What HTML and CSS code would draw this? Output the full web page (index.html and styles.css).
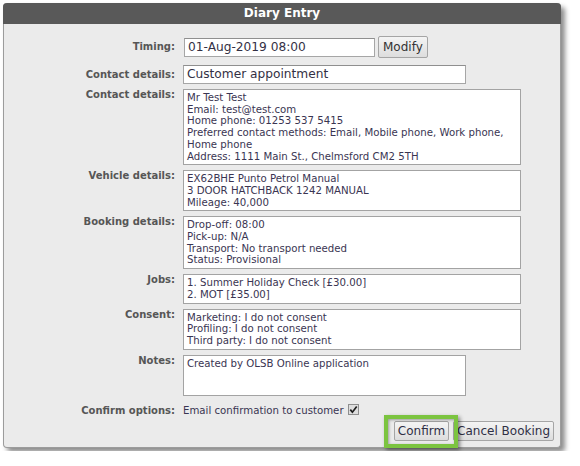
FILE: index.html
```html
<!DOCTYPE html>
<html>
<head>
<meta charset="utf-8">
<title>Diary Entry</title>
<link rel="stylesheet" href="styles.css">
</head>
<body>
<div class="panel">
  <div class="header">Diary Entry</div>
  <div class="form">
    <div class="label mid">Timing:</div>
    <div class="value inline">
      <span class="input timing">01-Aug-2019 08:00</span>
      <span class="btn modify">Modify</span>
    </div>

    <div class="label mid shift">Contact details:</div>
    <div class="value shift"><span class="input wide">Customer appointment</span></div>

    <div class="label">Contact details:</div>
    <div class="value"><div class="box">Mr Test Test<br>Email: test@test.com<br>Home phone: 01253 537 5415<br>Preferred contact methods: Email, Mobile phone, Work phone, Home phone<br>Address: 1111 Main St., Chelmsford CM2 5TH</div></div>

    <div class="label">Vehicle details:</div>
    <div class="value"><div class="box">EX62BHE Punto Petrol Manual<br>3 DOOR HATCHBACK 1242 MANUAL<br>Mileage: 40,000</div></div>

    <div class="label">Booking details:</div>
    <div class="value"><div class="box">Drop-off: 08:00<br>Pick-up: N/A<br>Transport: No transport needed<br>Status: Provisional</div></div>

    <div class="label">Jobs:</div>
    <div class="value"><div class="box">1. Summer Holiday Check [£30.00]<br>2. MOT [£35.00]</div></div>

    <div class="label">Consent:</div>
    <div class="value"><div class="box">Marketing: I do not consent<br>Profiling: I do not consent<br>Third party: I do not consent</div></div>

    <div class="label">Notes:</div>
    <div class="value"><div class="box notes">Created by OLSB Online application</div></div>

    <div class="label opt">Confirm options:</div>
    <div class="value opt">Email confirmation to customer <svg class="check" width="11" height="11" viewBox="0 0 11 11"><rect x="0.5" y="0.5" width="10" height="10" fill="#dedede" stroke="#8e8e8e"/><path d="M2.3 5.6 L4.4 8.2 L8.7 2.4" fill="none" stroke="#1e1e1e" stroke-width="1.7"/></svg></div>
  </div>
  <div class="actions">
    <span class="btn highlight">Confirm</span>
    <span class="btn">Cancel Booking</span>
  </div>
</div>
</body>
</html>
```
FILE: styles.css
```css
body {
  margin: 0;
  padding: 3px;
  background: #ffffff;
  font-family: "DejaVu Sans", Verdana, sans-serif;
}

.panel {
  width: 558px;
  box-sizing: border-box;
  background: #ebebeb;
  border: 1px solid #9c9c9c;
  border-top: 0;
  border-radius: 4px;
  box-shadow: 4px 4px 5px rgba(0, 0, 0, 0.45);
}

.header {
  height: 21px;
  margin: 0 -1px;
  background: #595959;
  color: #ffffff;
  font-weight: bold;
  font-size: 12px;
  line-height: 21px;
  text-align: center;
  border-radius: 4px 4px 0 0;
}

.form {
  display: grid;
  grid-template-columns: 171px 1fr;
  column-gap: 8px;
  row-gap: 5px;
  padding-top: 12px;
}

.label {
  text-align: right;
  font-weight: bold;
  font-size: 10px;
  line-height: 12px;
  color: #565656;
  align-self: start;
  white-space: nowrap;
}

.label.mid {
  align-self: center;
}

.shift {
  margin-top: 2px;
}

.value {
  color: #3a3552;
}

.inline {
  display: flex;
  align-items: center;
  gap: 3px;
  height: 22px;
}

.input {
  display: block;
  box-sizing: border-box;
  height: 19px;
  background: #ffffff;
  border: 1px solid #a6a6a6;
  border-top-color: #8f8f8f;
  padding: 0 3px;
  font-size: 12.2px;
  line-height: 17px;
  color: #333044;
  white-space: nowrap;
  overflow: hidden;
}

.input.timing {
  width: 191px;
  margin-left: 1px;
}

.input.wide {
  width: 283px;
}

.box {
  width: 338px;
  box-sizing: border-box;
  background: #ffffff;
  border: 1px solid #a3a3a3;
  padding: 2px 3px;
  font-size: 10.2px;
  line-height: 11.7px;
  color: #3a3552;
}

.box.notes {
  width: 283px;
  height: 41px;
}

.opt {
  margin-top: 3px;
  line-height: 14px;
}

.value.opt {
  font-size: 10.2px;
}

.check {
  vertical-align: -1px;
  margin-left: 1px;
}

.actions {
  display: flex;
  justify-content: flex-end;
  gap: 4px;
  padding: 3px 6px 6px 0;
}

.btn {
  display: inline-block;
  box-sizing: border-box;
  height: 20px;
  padding: 0 3px;
  border: 1px solid #a5a5a5;
  border-radius: 2px;
  background: linear-gradient(#f4f4f4, #dddddd);
  font-size: 12px;
  line-height: 18px;
  color: #2f2f45;
  white-space: nowrap;
}

.btn.modify {
  height: 22px;
  line-height: 20px;
  padding: 0 4px;
  color: #333333;
}

.highlight {
  position: relative;
}

.highlight::after {
  content: "";
  position: absolute;
  left: -11px;
  top: -7px;
  width: 74px;
  height: 33px;
  box-sizing: border-box;
  border: 4px solid #7cc440;
  box-shadow: 2px 2px 4px rgba(0, 0, 0, 0.45), inset 1px 1px 3px rgba(0, 0, 0, 0.35);
  z-index: 2;
}
```
